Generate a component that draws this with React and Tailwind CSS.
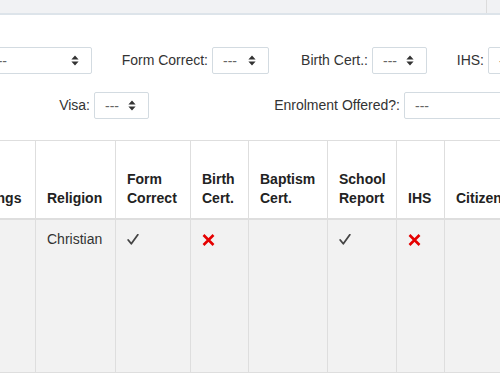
import React from "react";

function Arrows() {
  return (
    <svg width="8" height="11" viewBox="0 0 8 11" className="shrink-0">
      <path d="M4 0.5 L7.6 4.4 H0.4 Z M4 10.5 L7.6 6.6 H0.4 Z" fill="#333" />
    </svg>
  );
}

function Select({ className = "" }) {
  return (
    <div
      className={
        "h-[27px] shrink-0 flex items-center justify-between pl-[10px] pr-[12px] bg-white border border-[#d3dbe1] rounded-[2px] " +
        className
      }
    >
      <span className="text-[14px] text-[#666] leading-none">---</span>
      <Arrows />
    </div>
  );
}

function Check() {
  return (
    <svg width="12" height="11" viewBox="0 0 12 11" className="inline-block align-middle">
      <path d="M1.2 6 L4.3 9.8 L10.8 0.8" fill="none" stroke="#444" strokeWidth="1.8" strokeLinecap="round" strokeLinejoin="round" />
    </svg>
  );
}

function Cross() {
  return (
    <svg width="13" height="12" viewBox="0 0 13 12" className="inline-block align-middle">
      <path d="M1.5 1 L11.5 11 M11.5 1 L1.5 11" fill="none" stroke="#e50000" strokeWidth="2.6" />
    </svg>
  );
}

export default function App() {
  const headers = [
    { w: "w-[80px]", lines: ["Siblings"] },
    { w: "w-[80px]", lines: ["Religion"] },
    { w: "w-[75px]", lines: ["Form", "Correct"] },
    { w: "w-[58px]", lines: ["Birth", "Cert."] },
    { w: "w-[79px]", lines: ["Baptism", "Cert."] },
    { w: "w-[69px]", lines: ["School", "Report"] },
    { w: "w-[48px]", lines: ["IHS"] },
    { w: "w-[110px]", lines: ["Citizenship"] },
  ];
  const body = [null, "Christian", "check", "cross", null, "check", "cross", null];

  return (
    <div className="w-[500px] h-[378px] overflow-hidden bg-white font-['Liberation_Sans',Arial,sans-serif] text-[14px] text-[#333]">
      <div className="h-[15px] bg-[#f1f2f4] border-b-2 border-[#dde4ea] flex justify-end">
        <div className="w-[14px] h-full border-l border-[#dcdcdc]" />
      </div>

      <div className="mt-[32px] flex items-center h-[27px] whitespace-nowrap">
        <Select className="w-[110px] ml-[-18px]" />
        <div className="w-[177px] shrink-0 flex items-center justify-end gap-[4px]">
          <span>Form Correct:</span>
          <Select className="w-[57px]" />
        </div>
        <div className="w-[158px] shrink-0 flex items-center justify-end gap-[4px]">
          <span>Birth Cert.:</span>
          <Select className="w-[55px]" />
        </div>
        <div className="w-[121px] shrink-0 flex items-center justify-end gap-[4px]">
          <span>IHS:</span>
          <Select className="w-[60px]" />
        </div>
      </div>

      <div className="mt-[18px] flex items-center h-[27px] whitespace-nowrap">
        <div className="w-[149px] shrink-0 flex items-center justify-end gap-[4px]">
          <span>Visa:</span>
          <Select className="w-[55px]" />
        </div>
        <div className="w-[405px] shrink-0 flex items-center justify-end gap-[4px]">
          <span>Enrolment Offered?:</span>
          <Select className="w-[150px]" />
        </div>
      </div>

      <div className="mt-[21px] ml-[-45px]">
        <table className="table-fixed border-collapse w-[599px]">
          <colgroup>
            {headers.map((h, i) => (
              <col key={i} className={h.w} />
            ))}
          </colgroup>
          <thead>
            <tr className="h-[78px]">
              {headers.map((h, i) => (
                <th
                  key={i}
                  className="align-bottom text-left font-bold text-[#222] leading-[19px] pl-[11px] pr-[12px] pb-[10px] border border-t border-b-2 border-[#dedede] whitespace-nowrap"
                >
                  {h.lines.map((l, j) => (
                    <div key={j}>{l}</div>
                  ))}
                </th>
              ))}
            </tr>
          </thead>
          <tbody>
            <tr className="h-[154px] bg-[#f2f2f2]">
              {body.map((c, i) => (
                <td
                  key={i}
                  className="align-top pl-[11px] pr-[12px] pt-[10px] leading-[19px] border border-[#dedede] text-[#333]"
                >
                  {c === "check" ? <Check /> : c === "cross" ? <Cross /> : c}
                </td>
              ))}
            </tr>
          </tbody>
        </table>
      </div>
    </div>
  );
}
